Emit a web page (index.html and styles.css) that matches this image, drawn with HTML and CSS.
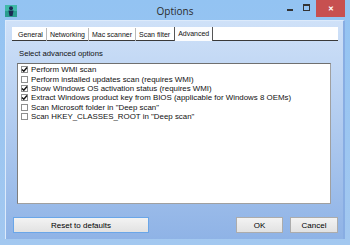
FILE: index.html
```html
<!DOCTYPE html>
<html lang="en">
<head>
    <meta charset="UTF-8">
    <title>Options</title>
    <link rel="stylesheet" href="styles.css">
</head>
<body>
    <div class="window">
        <div class="titlebar">
            <svg class="app-icon" width="12" height="12" viewBox="0 0 12 12">
                <rect x="0" y="0" width="12" height="12" fill="#3fb9a8"/>
                <rect x="0" y="6" width="12" height="6" fill="#2a9d8f"/>
                <circle cx="6" cy="3.2" r="2" fill="#1b2a55"/>
                <path d="M3.5 5.5 H8.5 L7.5 11 H4.5 Z" fill="#1b2a55"/>
            </svg>
            <div class="title">Options</div>
            <div class="controls">
                <span class="ctl min"><i></i></span>
                <span class="ctl max"><i></i></span>
                <span class="ctl close">&#x2715;</span>
            </div>
        </div>
        <div class="client">
            <div class="tabs">
                <div class="tab">General</div>
                <div class="tab">Networking</div>
                <div class="tab">Mac scanner</div>
                <div class="tab">Scan filter</div>
                <div class="tab active">Advanced</div>
            </div>
            <div class="page">
                <div class="caption">Select advanced options</div>
                <div class="list">
                    <div class="row"><span class="box"><svg viewBox="0 0 7 7"><path d="M1 3.5 L2.8 5.3 L6 1.5" fill="none" stroke="#111" stroke-width="1.4"/></svg></span>Perform WMI scan</div>
                    <div class="row"><span class="box"></span>Perform installed updates scan (requires WMI)</div>
                    <div class="row"><span class="box"><svg viewBox="0 0 7 7"><path d="M1 3.5 L2.8 5.3 L6 1.5" fill="none" stroke="#111" stroke-width="1.4"/></svg></span>Show Windows OS activation status (requires WMI)</div>
                    <div class="row"><span class="box"><svg viewBox="0 0 7 7"><path d="M1 3.5 L2.8 5.3 L6 1.5" fill="none" stroke="#111" stroke-width="1.4"/></svg></span>Extract Windows product key from BIOS (applicable for Windows 8 OEMs)</div>
                    <div class="row"><span class="box"></span>Scan Microsoft folder in "Deep scan"</div>
                    <div class="row"><span class="box"></span>Scan HKEY_CLASSES_ROOT in "Deep scan"</div>
                </div>
            </div>
            <div class="buttons">
                <button class="btn reset">Reset to defaults</button>
                <button class="btn ok">OK</button>
                <button class="btn cancel">Cancel</button>
            </div>
        </div>
    </div>
</body>
</html>
```

FILE: styles.css
```css
body {
    margin: 0;
    font-family: 'Liberation Sans', Arial, sans-serif;
    background: #92c2f1;
}
.window {
    width: 350px;
    height: 245px;
    display: flex;
    flex-direction: column;
    background: linear-gradient(to bottom, #93c3f2, #a3c8f0);
}
.titlebar {
    height: 20px;
    display: grid;
    grid-template-columns: 1fr auto 1fr;
    align-items: center;
}
.app-icon {
    margin-left: 5px;
    margin-top: 1px;
}
.title {
    font-family: 'Open Sans', 'Noto Sans', sans-serif;
    font-size: 10px;
    color: #2b2b2b;
    margin-top: 1px;
}
.controls {
    justify-self: end;
    align-self: start;
    display: flex;
    margin-right: 5px;
}
.ctl {
    height: 17px;
    display: flex;
    align-items: center;
    justify-content: center;
}
.min {
    width: 15px;
}
.min i {
    width: 6px;
    height: 2px;
    background: #333;
    margin-top: 3px;
}
.max {
    width: 19px;
}
.max i {
    width: 5px;
    height: 4px;
    border: 1px solid #333;
    border-top-width: 2px;
    margin-top: -2px;
}
.close {
    width: 29px;
    background: #c75050;
    color: #fff;
    font-size: 7px;
    font-weight: bold;
}
.client {
    flex: 1;
    margin: 0 5px 6px 5px;
    padding: 6px 5px 6px 6px;
    border-left: 1px solid #dceafb;
    border-top: 1px solid #dceafb;
    border-right: 2px solid #88ade3;
    background: linear-gradient(to bottom, #cfe1f8, #8fb3e6);
    display: flex;
    flex-direction: column;
}
.tabs {
    display: flex;
    height: 14px;
    padding-left: 3px;
    background: #fff;
    border-bottom: 1px solid #3a3a3a;
    box-sizing: border-box;
    font-size: 7px;
    color: #111;
}
.tab {
    padding: 0 3px;
    line-height: 14px;
    height: 13px;
    display: flex;
    align-items: center;
    margin-top: 1px;
}
.tab + .tab {
    border-left: 1px solid #b9b9b9;
}
.tab.active {
    margin-left: 1px;
    margin-top: 0;
    height: 14px;
    border-left: 1px solid #555;
    border-right: 1px solid #555;
    margin-bottom: -1px;
    background: #fbfcfe;
}
.page {
    padding: 7px 7px 0 5px;
}
.caption {
    font-size: 7.7px;
    line-height: 12px;
    color: #111;
    padding-left: 2px;
    margin-bottom: 3px;
}
.list {
    height: 141px;
    box-sizing: border-box;
    background: #fff;
    border: 1px solid #a0a0a0;
    border-top-color: #6f6f6f;
    border-left-color: #7d7d7d;
    padding: 1px 3px;
    font-size: 7.9px;
    color: #111;
}
.row {
    height: 9.4px;
    display: flex;
    align-items: center;
    white-space: nowrap;
}
.box {
    width: 7px;
    height: 7px;
    border: 1px solid #8e8f8f;
    background: #fff;
    margin-right: 3px;
    flex: none;
    box-sizing: border-box;
    display: flex;
}
.box svg {
    width: 7px;
    height: 7px;
    margin: -1px;
}
.buttons {
    margin-top: auto;
    display: flex;
    gap: 7px;
    padding-left: 1px;
}
.btn {
    height: 16px;
    padding: 0;
    font-family: 'Liberation Sans', Arial, sans-serif;
    font-size: 8px;
    color: #000;
    background: linear-gradient(to bottom, #f3f3f3, #e2e2e2);
    border: 1px solid #acacac;
}
.reset {
    width: 136px;
    border-color: #6aa6e8;
}
.ok {
    width: 47px;
    margin-left: auto;
}
.cancel {
    width: 48px;
}
```
